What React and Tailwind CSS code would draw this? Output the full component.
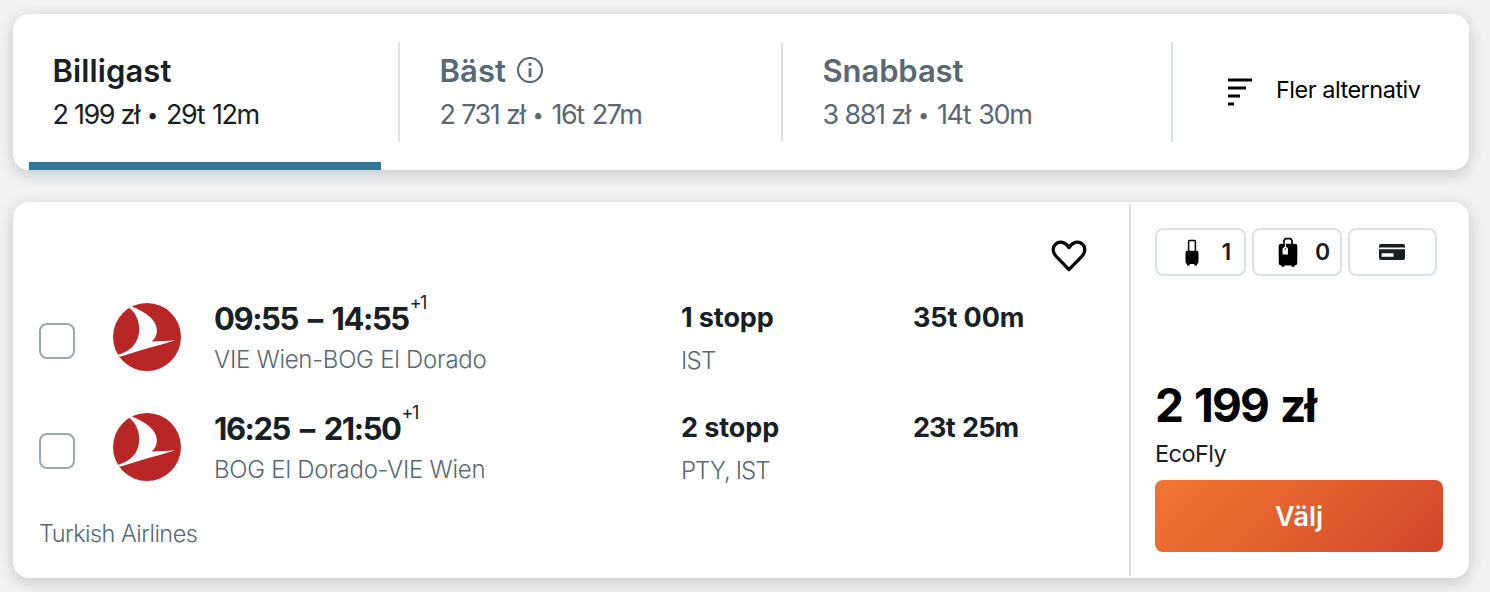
/* ================= ICONS ================= */
const InfoIcon = ({ className }) => (
  <svg className={className} viewBox="0 0 26 26" fill="none" stroke="currentColor">
    <circle cx="13" cy="13" r="12" strokeWidth="2.2" />
    <path strokeWidth="2.8" d="M13 5.8v3M13 11.3v8.9" />
  </svg>
);

const SortIcon = ({ className }) => (
  <svg className={className} viewBox="0 0 24 28" fill="currentColor">
    <path d="M0 0.4h24v3H0zM0 8.4h18v3H0zM0 16.4h12v3H0zM0 24.4h6v3H0z" />
  </svg>
);

const HeartIcon = ({ className }) => (
  <svg className={className} viewBox="0 0 36 32" fill="none" stroke="currentColor">
    <path
      strokeWidth="3.3"
      strokeLinejoin="round"
      d="M18 29.6 5.2 16.4C1.2 12 1.4 7 4.5 4.2 8.3 0.8 14.4 1.6 18 7.6 21.6 1.6 27.7 0.8 31.5 4.2c3.1 2.8 3.3 7.8-.7 12.2z"
    />
  </svg>
);

const CabinBagIcon = ({ className }) => (
  <svg className={className} viewBox="0 0 14 27" fill="currentColor">
    <path fill="none" stroke="currentColor" strokeWidth="1.5" d="M3.6 12V2.4q0-.9.9-.9h5q.9 0 .9.9V12" />
    <rect x="0.5" y="11.8" width="13" height="13.2" rx="2" />
    <path d="M2 24h2.6v2.6H2zM9.4 24H12v2.6H9.4z" />
  </svg>
);

const CheckedBagIcon = ({ className }) => (
  <svg className={className} viewBox="0 0 20 30" fill="currentColor">
    <path fill="none" stroke="currentColor" strokeWidth="1.7" d="M6 7V3.6l1.4-1.9h5.2L14 3.6V7" />
    <rect x="0.7" y="6.7" width="18.6" height="21.8" rx="2.4" />
    <path d="M3.4 28h3v1.8h-3zM13.6 28h3v1.8h-3z" />
    <path fill="#fff" d="M6.9 5h1v4.6l2 1.8v6.2H4.6v-6.2l2.3-1.8z" />
    <circle cx="7.3" cy="12" r="0.7" />
  </svg>
);

const CardIcon = ({ className }) => (
  <svg className={className} viewBox="0 0 26 16" fill="currentColor">
    <rect width="26" height="16" rx="2" />
    <path fill="#fff" d="M0 3.6h26v1.6H0zM2.6 9.2h12v3.6h-12z" />
  </svg>
);

const AirlineLogo = ({ className }) => (
  <svg className={className} viewBox="0 0 68 68">
    <circle cx="34" cy="34" r="34" fill="#b92626" />
    <path
      fill="#fff"
      d="M16.3 4.9 18.6 3.5C32 8.5 44.3 17 43.9 28c-.2 4.2-1.9 7.5-5.2 10.5 8.3-.5 15.3-.7 23.6-1.3C44 43 25 47.5 7 53.8L4.6 52C18 48.2 26.2 39.5 26.2 26c0-9-3.7-16.5-9.9-21.1z"
    />
  </svg>
);

/* ================= DATA ================= */
const tabs = [
  {
    name: "Billigast", price: "2 199 zł", time: "29t 12m", active: true,
    width: "w-[387px]", title: "tracking-[0.1px]", details: "tracking-[-1.5px]",
  },
  {
    name: "Bäst", price: "2 731 zł", time: "16t 27m", info: true,
    width: "w-[383px]", title: "tracking-[0.1px]", details: "tracking-[-1.45px]",
  },
  {
    name: "Snabbast", price: "3 881 zł", time: "14t 30m",
    width: "w-[390px]", title: "tracking-[-0.1px]", details: "tracking-[-1.4px]",
  },
];

const legs = [
  {
    times: "09:55 – 14:55", timesClass: "tracking-[-1.45px]",
    route: "VIE Wien-BOG El Dorado", stops: "1 stopp", via: "IST",
    viaClass: "tracking-[-0.7px]", duration: "35t 00m", durationClass: "tracking-[-0.1px]",
  },
  {
    times: "16:25 – 21:50", timesClass: "tracking-[-1.45px]",
    route: "BOG El Dorado-VIE Wien", stops: "2 stopp", via: "PTY, IST",
    viaClass: "tracking-[-0.95px]", duration: "23t 25m", durationClass: "tracking-[-0.9px] [word-spacing:2px]",
  },
];

/* ================= SORT BAR ================= */
const SortTab = ({ tab }) => (
  <div
    className={`${tab.width} h-[100px] shrink-0 border-r-2 border-[#d9e1e8] pl-[39.5px] pt-[9px]
      ${tab.active ? "text-[#192024]" : "text-[#5a6872]"}`}
  >
    <div className="flex items-center h-10 gap-[11px]">
      <span className={`text-[31px] leading-10 font-semibold ${tab.title}`}>{tab.name}</span>
      {tab.info && <InfoIcon className="w-[26px] h-[26px] -mt-[2px]" />}
    </div>
    <div className="flex items-center text-[27px] leading-[48px] whitespace-nowrap">
      <span className={`[word-spacing:0.5px] ${tab.details}`}>{tab.price}</span>
      <span className="w-[27px] text-center text-[20px]">•</span>
      <span className={`[word-spacing:2px] ${tab.details}`}>{tab.time}</span>
    </div>
  </div>
);

const SortBar = () => (
  <section className="h-[156px] bg-white rounded-2xl shadow-[0_4px_16px_rgba(25,32,36,0.2)]">
    <div className="flex pt-7">
      {tabs.map(tab => (
        <SortTab key={tab.name} tab={tab} />
      ))}
      <button className="flex items-center h-[96px] pl-[55px] text-black">
        <SortIcon className="w-6 h-7 mt-[3px]" />
        <span className="ml-6 text-[23.5px] tracking-[-0.5px] whitespace-nowrap">Fler alternativ</span>
      </button>
    </div>
    <div className="mt-5 ml-4 w-[352px] h-2 bg-[#317799]" />
  </section>
);

/* ================= RESULT ================= */
const Leg = ({ leg }) => (
  <div className="grid grid-cols-[74px_101px_467px_232px_1fr] items-center h-[110px] whitespace-nowrap">
    <span className="w-9 h-9 mt-2 rounded-lg border-2 border-[#9ba8b0]" />
    <AirlineLogo className="w-[68px] h-[68px]" />
    <div className="mt-[3px]">
      <p className="flex text-[31px] leading-[41px] font-bold">
        <span className={`[word-spacing:4px] ${leg.timesClass}`}>{leg.times}</span>
        <span className="ml-[1px] -mt-4 text-[18px] font-normal tracking-[-1.5px]">+1</span>
      </p>
      <p className="text-2xl leading-[41px] font-light tracking-[-0.26px] text-[#5a6872]">{leg.route}</p>
    </div>
    <div className="mt-1">
      <p className="text-[27px] leading-[43px] font-bold tracking-[-0.1px]">{leg.stops}</p>
      <p className={`text-2xl leading-[43px] font-light text-[#5a6872] ${leg.viaClass}`}>{leg.via}</p>
    </div>
    <p className={`mt-1 mb-[43px] text-[27px] leading-[43px] font-bold ${leg.durationClass}`}>{leg.duration}</p>
  </div>
);

const Result = () => (
  <section className="flex h-[376px] bg-white rounded-2xl shadow-[0_4px_16px_rgba(25,32,36,0.2)] text-[#192024]">
    <div className="w-[1116px] pl-[26px]">
      <div className="flex justify-end h-20 pt-[38px] pr-[42px]">
        <HeartIcon className="w-9 h-8 text-black" />
      </div>
      {legs.map(leg => (
        <Leg key={leg.route} leg={leg} />
      ))}
      <p className="pt-4 text-[23.5px] leading-8 font-light tracking-[-0.53px] text-[#5a6872]">Turkish Airlines</p>
    </div>

    <div className="w-[340px] my-[2px] pt-6 pl-6 border-l-2 border-[#d9e1e8]">
      <div className="flex gap-[6px] h-12 text-[23px] font-semibold">
        <span className="flex items-center w-[91px] pl-[28px] border-2 border-[#d9e1e8] rounded-lg">
          <CabinBagIcon className="w-[14px] h-[27px] text-black" />
          <span className="ml-[22.5px]">1</span>
        </span>
        <span className="flex items-center w-[90px] pl-[24px] border-2 border-[#d9e1e8] rounded-lg">
          <CheckedBagIcon className="w-5 h-[30px] text-black" />
          <span className="ml-[17px]">0</span>
        </span>
        <span className="flex items-center justify-center w-[89px] pr-px border-2 border-[#d9e1e8] rounded-lg">
          <CardIcon className="w-[26px] h-4" />
        </span>
      </div>
      <p className="mt-[100px] text-[46px] leading-[58px] font-bold tracking-[-1.9px] [word-spacing:3px] text-black">2 199 zł</p>
      <p className="mt-1 text-[23.5px] leading-[32px] tracking-[-0.56px]">EcoFly</p>
      <button className="mt-[10px] w-[288px] h-[72px] pt-[2px] rounded-lg bg-linear-135 from-[#f07631] to-[#d4462c] text-[27px] font-semibold text-white">
        Välj
      </button>
    </div>
  </section>
);

const App = () => (
  <main className="flex flex-col gap-8 h-[592px] overflow-hidden pt-[14px] pl-[13px] pr-[21px] bg-[#f1f2f4] font-['Inter',sans-serif]">
    <SortBar />
    <Result />
  </main>
);

export default App;
